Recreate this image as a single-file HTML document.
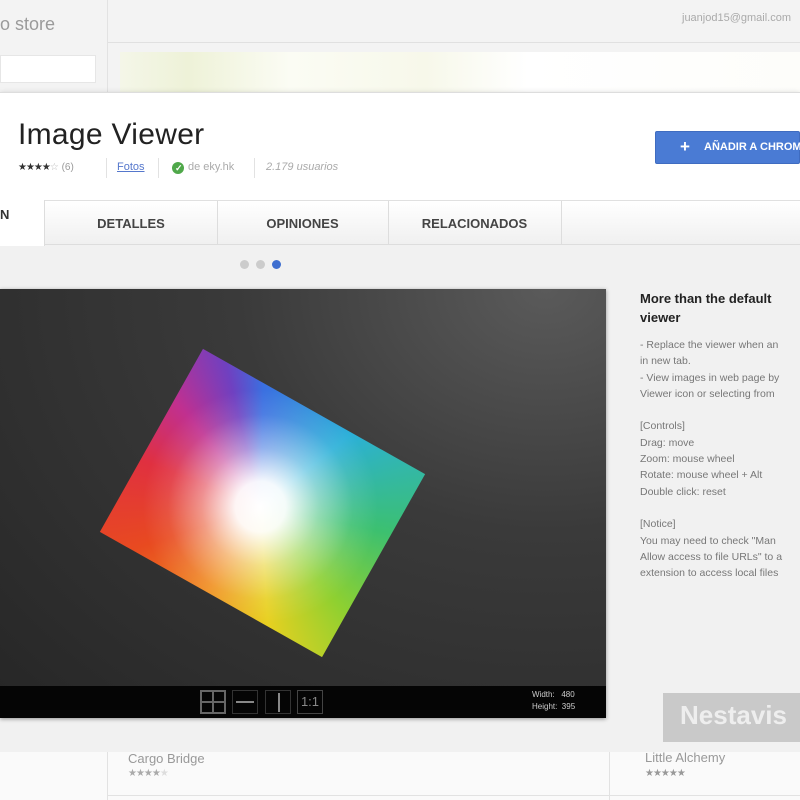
<!DOCTYPE html>
<html><head><meta charset="utf-8"><style>
*{margin:0;padding:0;box-sizing:border-box}
body{width:800px;height:800px;overflow:hidden;background:#f1f1f1;font-family:"Liberation Sans",sans-serif;position:relative}
.a{position:absolute}
</style></head><body>
<div class="a" style="left:0;top:0;width:800px;height:92px;background:#f3f3f3"></div>
<div class="a" style="left:107px;top:0;width:1px;height:92px;background:#e2e2e2"></div>
<div class="a" style="left:108px;top:42px;width:692px;height:1px;background:#e0e0e0"></div>
<div class="a" style="left:0;top:14px;font-size:18px;color:#9a9a9a">o store</div>
<div class="a" style="left:0;top:55px;width:96px;height:28px;background:#fff;border:1px solid #e6e6e6"></div>
<div class="a" style="left:682px;top:12px;font-size:11px;color:#aaa">juanjod15@gmail.com</div>
<div class="a" style="left:120px;top:52px;width:680px;height:40px;background:linear-gradient(90deg,#f4f6e8 0%,#eef2d8 10%,#fbfcf4 25%,#f7f8ea 45%,#fff 60%,#fdfdfa 100%)"></div>
<div class="a" style="left:0;top:92px;width:800px;height:660px;background:#f1f1f1;box-shadow:0 2px 6px rgba(0,0,0,.25)"></div>
<div class="a" style="left:0;top:92px;width:800px;height:108px;background:#fff;border-top:1px solid #ddd"></div>
<div class="a" style="left:18px;top:118px;font-size:30px;color:#222;letter-spacing:.3px">Image Viewer</div>
<div class="a" style="left:18px;top:162px;font-size:10px;color:#999;white-space:nowrap"><span style="color:#333;letter-spacing:-1px">★★★★</span><span style="color:#bbb">☆</span> (6)</div>
<div class="a" style="left:106px;top:158px;width:1px;height:20px;background:#e2e2e2"></div>
<div class="a" style="left:117px;top:161px;font-size:11px;color:#5577cc;text-decoration:underline">Fotos</div>
<div class="a" style="left:158px;top:158px;width:1px;height:20px;background:#e2e2e2"></div>
<div class="a" style="left:172px;top:162px;width:12px;height:12px;border-radius:50%;background:#4fa84a"></div>
<div class="a" style="left:175px;top:163px;font-size:9px;color:#fff;font-weight:bold">✓</div>
<div class="a" style="left:188px;top:161px;font-size:11px;color:#aaa">de eky.hk</div>
<div class="a" style="left:254px;top:158px;width:1px;height:20px;background:#e2e2e2"></div>
<div class="a" style="left:266px;top:161px;font-size:11px;color:#aaa;font-style:italic">2.179 usuarios</div>
<div class="a" style="left:655px;top:131px;width:145px;height:33px;background:#4a7bd4;border-radius:2px;border:1px solid #3f6cc0"></div>
<div class="a" style="left:680px;top:137px;font-size:17px;color:#fff;font-weight:bold">+</div>
<div class="a" style="left:704px;top:141px;font-size:11px;color:#fff;font-weight:bold;white-space:nowrap">AÑADIR A CHROME</div>
<div class="a" style="left:0;top:200px;width:800px;height:45px;background:linear-gradient(#fff,#f0f0f0);border-top:1px solid #e0e0e0;border-bottom:1px solid #ddd"></div>
<div class="a" style="left:0;top:200px;width:45px;height:46px;background:#fff;border-right:1px solid #ddd"></div>
<div class="a" style="left:0;top:207px;font-size:13px;font-weight:bold;color:#333">N</div>
<div class="a" style="left:217px;top:201px;width:1px;height:43px;background:#ddd"></div>
<div class="a" style="left:388px;top:201px;width:1px;height:43px;background:#ddd"></div>
<div class="a" style="left:561px;top:201px;width:1px;height:43px;background:#ddd"></div>
<div class="a" style="left:45px;top:216px;width:172px;text-align:center;font-size:13px;font-weight:bold;color:#444">DETALLES</div>
<div class="a" style="left:217px;top:216px;width:171px;text-align:center;font-size:13px;font-weight:bold;color:#444">OPINIONES</div>
<div class="a" style="left:388px;top:216px;width:173px;text-align:center;font-size:13px;font-weight:bold;color:#444">RELACIONADOS</div>
<div class="a" style="left:240px;top:260px;width:9px;height:9px;border-radius:50%;background:#ccc"></div>
<div class="a" style="left:256px;top:260px;width:9px;height:9px;border-radius:50%;background:#ccc"></div>
<div class="a" style="left:272px;top:260px;width:9px;height:9px;border-radius:50%;background:#3f6fd0"></div>
<div class="a" style="left:0;top:289px;width:606px;height:429px;background:radial-gradient(ellipse at 90% 0%,#5a5a5a,#3a3a3a 40%,#262626 100%);box-shadow:0 1px 4px rgba(0,0,0,.4);overflow:hidden">
 <div class="a" style="left:135px;top:109px;width:255px;height:210px;transform:rotate(29.4deg);background:radial-gradient(circle at 50% 52%,#fff 0%,rgba(255,255,255,.95) 15%,rgba(255,255,255,.45) 35%,rgba(255,255,255,.1) 55%,rgba(255,255,255,0) 70%),conic-gradient(from -28deg at 50% 52%,#3a6fe0,#2bb0d8 50deg,#3cc070 100deg,#8fd030 140deg,#e8d020 175deg,#f09020 210deg,#e84a20 250deg,#e03040 290deg,#c03090 320deg,#7040c0 345deg,#3a6fe0)"></div>
 <div class="a" style="left:0;top:397px;width:606px;height:32px;background:#050505"></div>
 <div class="a" style="left:200px;top:401px;width:26px;height:24px;border:2px solid #666;background:linear-gradient(#666,#666) 50% 0/2px 100% no-repeat,linear-gradient(#666,#666) 0 50%/100% 2px no-repeat"></div>
 <div class="a" style="left:232px;top:401px;width:26px;height:24px;border:1px solid #333"><div class="a" style="left:3px;top:10px;width:18px;height:2px;background:#888"></div></div>
 <div class="a" style="left:265px;top:401px;width:26px;height:24px;border:1px solid #333"><div class="a" style="left:12px;top:2px;width:2px;height:19px;background:#888"></div></div>
 <div class="a" style="left:297px;top:401px;width:26px;height:24px;border:1px solid #444;color:#888;font-size:13px;text-align:center;line-height:22px">1:1</div>
 <div class="a" style="left:532px;top:400px;font-size:8px;color:#ccc;line-height:12px">Width: &nbsp;&nbsp;480<br>Height: &nbsp;395</div>
</div>
<div class="a" style="left:640px;top:289px;width:170px;font-size:13px;font-weight:bold;color:#222;line-height:19px;white-space:nowrap">More than the default<br>viewer</div>
<div class="a" style="left:640px;top:337px;font-size:10.5px;color:#777;line-height:16.3px;white-space:nowrap">- Replace the viewer when an<br>in new tab.<br>- View images in web page by<br>Viewer icon or selecting from<br><br>[Controls]<br>Drag: move<br>Zoom: mouse wheel<br>Rotate: mouse wheel + Alt<br>Double click: reset<br><br>[Notice]<br>You may need to check "Man<br>Allow access to file URLs" to a<br>extension to access local files</div>
<div class="a" style="left:663px;top:693px;width:137px;height:49px;background:#c9c9c9"></div>
<div class="a" style="left:680px;top:700px;font-size:26px;font-weight:bold;color:#eee;white-space:nowrap">Nestavis</div>
<div class="a" style="left:0;top:752px;width:800px;height:48px;background:#fafafa"></div>
<div class="a" style="left:107px;top:752px;width:1px;height:48px;background:#e2e2e2"></div>
<div class="a" style="left:609px;top:752px;width:1px;height:48px;background:#e2e2e2"></div>
<div class="a" style="left:107px;top:795px;width:693px;height:1px;background:#e2e2e2"></div>
<div class="a" style="left:128px;top:751px;font-size:13px;color:#999">Cargo Bridge</div>
<div class="a" style="left:128px;top:768px;font-size:10px;color:#aaa;letter-spacing:-1px">★★★★<span style="color:#ddd">★</span></div>
<div class="a" style="left:645px;top:750px;font-size:13px;color:#999">Little Alchemy</div>
<div class="a" style="left:645px;top:768px;font-size:10px;color:#999;letter-spacing:-1px">★★★★★</div>
</body></html>
